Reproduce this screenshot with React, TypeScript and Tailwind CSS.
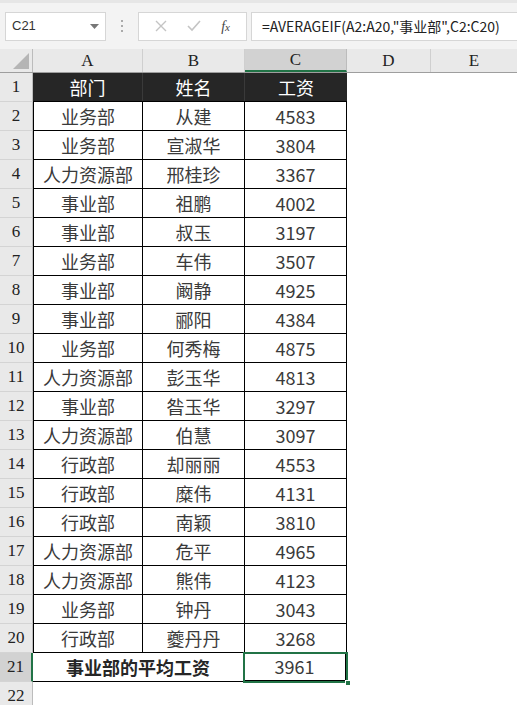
import React from "react";

const rows: [string, string, string][] = [
  ["业务部", "从建", "4583"],
  ["业务部", "宣淑华", "3804"],
  ["人力资源部", "邢桂珍", "3367"],
  ["事业部", "祖鹏", "4002"],
  ["事业部", "叔玉", "3197"],
  ["业务部", "车伟", "3507"],
  ["事业部", "阚静", "4925"],
  ["事业部", "郦阳", "4384"],
  ["业务部", "何秀梅", "4875"],
  ["人力资源部", "彭玉华", "4813"],
  ["事业部", "昝玉华", "3297"],
  ["人力资源部", "伯慧", "3097"],
  ["行政部", "却丽丽", "4553"],
  ["行政部", "糜伟", "4131"],
  ["行政部", "南颖", "3810"],
  ["人力资源部", "危平", "4965"],
  ["人力资源部", "熊伟", "4123"],
  ["业务部", "钟丹", "3043"],
  ["行政部", "夔丹丹", "3268"],
];

const cellFont = { fontFamily: '"Noto Sans CJK SC", "Noto Sans", sans-serif' };
const serif = { fontFamily: '"Liberation Serif", "DejaVu Serif", serif' };

function RowHead({ n, active }: { n: number; active?: boolean }) {
  return (
    <div
      style={serif}
      className={`w-[33px] shrink-0 flex items-end justify-center pb-[2px] text-[17px] text-[#222] border-b border-[#d4d4d4] ${
        active ? "bg-[#d2d2d2] border-r-2 border-r-[#217346]" : "bg-[#e9e9e9] border-r border-r-[#bcbcbc]"
      }`}
    >
      {n}
    </div>
  );
}

function Cell({ w, children, first, bold }: { w: string; children?: React.ReactNode; first?: boolean; bold?: boolean }) {
  return (
    <div
      style={cellFont}
      className={`${w} shrink-0 flex items-center justify-center text-[18px] border-r border-b border-black ${
        first ? "border-l" : ""
      } ${bold ? "font-bold text-[#262626]" : "text-[#3a3a3a]"}`}
    >
      {children}
    </div>
  );
}

export default function App() {
  return (
    <div className="w-[517px] h-[705px] overflow-hidden bg-white relative">
      {/* formula bar */}
      <div className="h-[49px] bg-[#f3f3f3] border-t-[3px] border-[#e6e6e6] flex items-center relative">
        <div className="ml-[5px] w-[101px] h-[29px] bg-white border border-[#d6d6d6] flex items-center justify-between px-[6px]">
          <span className="text-[13px] text-[#333]" style={{ fontFamily: '"Liberation Sans", Arial, sans-serif' }}>
            C21
          </span>
          <svg width="9" height="5" viewBox="0 0 9 5">
            <path d="M0 0 L9 0 L4.5 5 Z" fill="#777" />
          </svg>
        </div>
        <div className="w-[32px] flex flex-col items-center gap-[3px]">
          <span className="w-[2px] h-[2px] bg-[#aaa]" />
          <span className="w-[2px] h-[2px] bg-[#aaa]" />
          <span className="w-[2px] h-[2px] bg-[#aaa]" />
        </div>
        <div className="w-[109px] h-[29px] bg-white border border-[#d6d6d6] flex items-center justify-around px-[6px]">
          <svg width="12" height="12" viewBox="0 0 12 12">
            <path d="M1 1 L11 11 M11 1 L1 11" stroke="#c4c4c4" strokeWidth="1.4" />
          </svg>
          <svg width="14" height="12" viewBox="0 0 14 12">
            <path d="M1 6 L5 10 L13 1" stroke="#c4c4c4" strokeWidth="1.6" fill="none" />
          </svg>
          <span className="text-[14px] italic text-[#444]" style={serif}>
            f<span className="text-[11px]">x</span>
          </span>
        </div>
        <div className="ml-[4px] flex-1 h-[29px] bg-white border-l border-y border-[#d6d6d6] flex items-center pl-[10px]">
          <span className="text-[14px] text-[#222]" style={cellFont}>
            =AVERAGEIF(A2:A20,"事业部",C2:C20)
          </span>
        </div>
      </div>

      {/* column headers */}
      <div className="flex h-[24px] bg-[#e9e9e9] border-b border-[#9e9e9e]" style={serif}>
        <div className="w-[33px] shrink-0 border-r border-[#bcbcbc] flex items-end justify-end pr-[3px] pb-[3px]">
          <svg width="16" height="16" viewBox="0 0 16 16">
            <path d="M16 0 L16 16 L0 16 Z" fill="#b5b5b5" />
          </svg>
        </div>
        <div className="w-[110px] shrink-0 border-r border-[#cfcfcf] flex items-center justify-center text-[17px] text-[#222]">A</div>
        <div className="w-[102px] shrink-0 border-r border-[#cfcfcf] flex items-center justify-center text-[17px] text-[#222]">B</div>
        <div className="w-[102px] shrink-0 bg-[#d2d2d2] border-r border-[#bcbcbc] border-b-2 border-b-[#217346] flex items-center justify-center text-[17px] text-[#222]">C</div>
        <div className="w-[84px] shrink-0 border-r border-[#cfcfcf] flex items-center justify-center text-[17px] text-[#222]">D</div>
        <div className="flex-1 flex items-center justify-center text-[17px] text-[#222]">E</div>
      </div>

      {/* row 1 */}
      <div className="flex h-[29px]">
        <RowHead n={1} />
        <div style={cellFont} className="w-[314px] shrink-0 flex bg-[#262626] text-white text-[18px] border-b border-black">
          <div className="w-[110px] flex items-center justify-center border-r border-[#3a3a3a]">部门</div>
          <div className="w-[102px] flex items-center justify-center border-r border-[#3a3a3a]">姓名</div>
          <div className="w-[102px] flex items-center justify-center">工资</div>
        </div>
      </div>

      {rows.map((r, i) => (
        <div key={i} className="flex h-[29px]">
          <RowHead n={i + 2} />
          <Cell w="w-[110px]" first>
            {r[0]}
          </Cell>
          <Cell w="w-[102px]">{r[1]}</Cell>
          <Cell w="w-[102px]">{r[2]}</Cell>
        </div>
      ))}

      {/* row 21 */}
      <div className="flex h-[29px]">
        <RowHead n={21} active />
        <Cell w="w-[211px]" bold>
          事业部的平均工资
        </Cell>
        <div className="relative w-[102px] shrink-0">
          <Cell w="w-[102px]">3961</Cell>
          <div className="absolute -left-[1px] -top-[1px] w-[105px] h-[31px] border-2 border-[#217346]" />
          <div className="absolute left-[101px] top-[27px] w-[6px] h-[6px] bg-[#217346] border border-white" />
        </div>
      </div>

      {/* row 22 */}
      <div className="flex h-[29px]">
        <RowHead n={22} />
      </div>
    </div>
  );
}
